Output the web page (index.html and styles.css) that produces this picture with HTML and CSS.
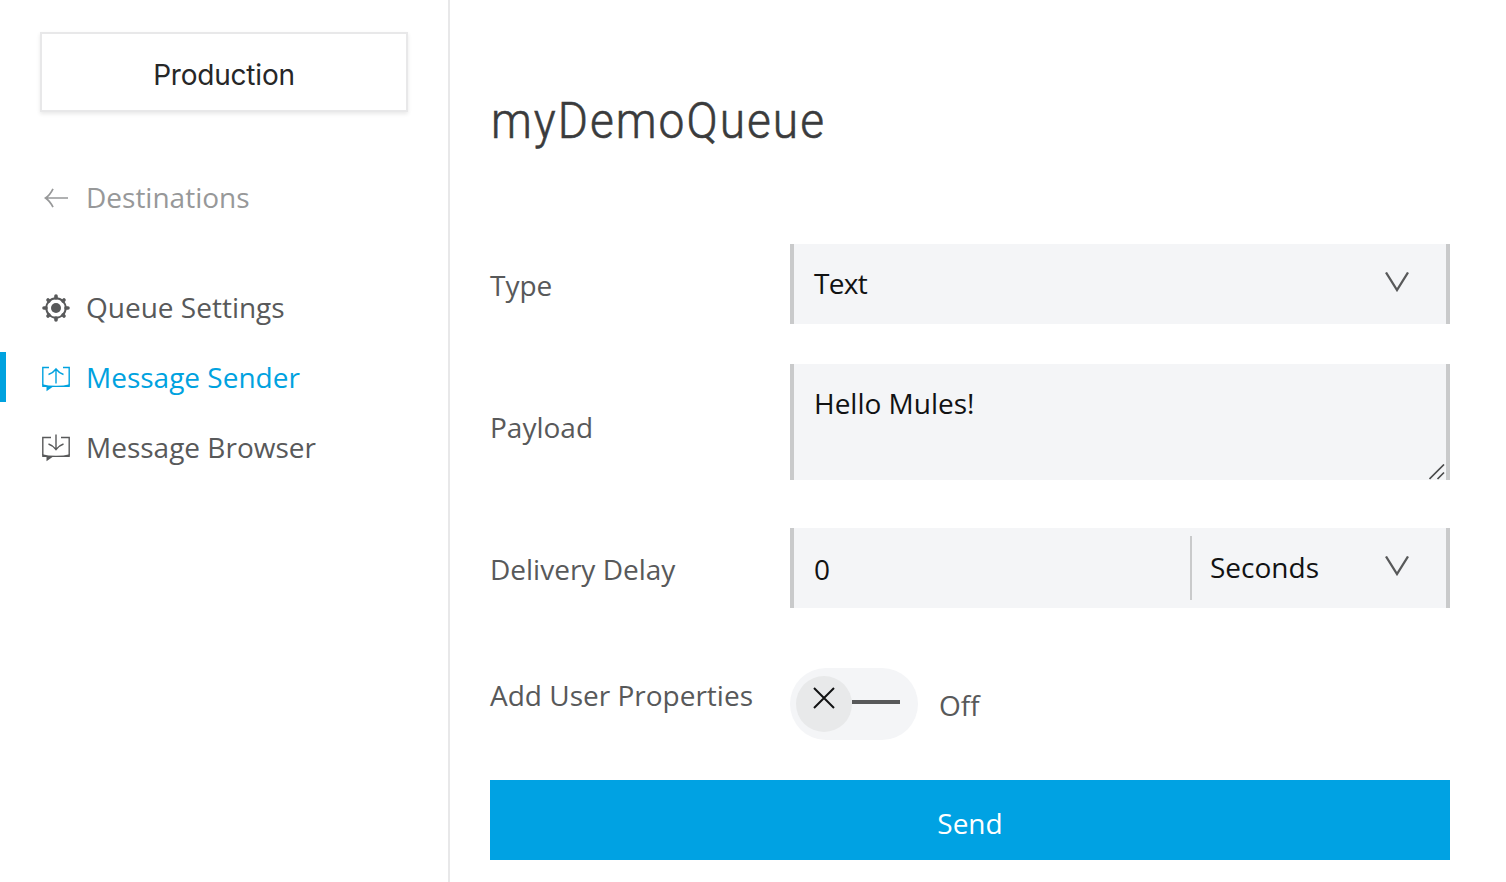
FILE: index.html
```html
<!DOCTYPE html>
<html lang="en">
<head>
<meta charset="utf-8">
<title>myDemoQueue</title>
<link rel="stylesheet" href="styles.css">
</head>
<body>
<div class="app">
  <aside class="sidebar">
    <button class="environment">Production</button>
    <nav class="nav">
      <a class="nav-item back">
        <svg class="icon" viewBox="0 0 28 28"><path d="M26 14H3.500M11 4.800Q8 11 3.500 14Q8 17 11 23.200" fill="none" stroke="currentColor" stroke-width="1.700"/></svg>
        <span>Destinations</span>
      </a>
      <a class="nav-item">
        <svg class="icon" viewBox="0 0 28 28"><circle cx="14" cy="14" r="9.700" fill="none" stroke="currentColor" stroke-width="2"/><circle cx="14" cy="14" r="5" fill="currentColor"/><path d="M14 2V4M14 24v2M2 14H4M24 14h2M6 6l1 1M21 21l1 1M6 22l1-1M21 7l1-1" stroke="currentColor" stroke-width="3.600" stroke-linecap="round"/></svg>
        <span>Queue Settings</span>
      </a>
      <a class="nav-item active">
        <svg class="icon" viewBox="0 0 28 28"><path d="M7 3.500H.8V21.500M27.200 21.500V3.500H21M14 19.500V5M6.500 10.500Q11 9 14 5Q17 9 21.500 10.500" fill="none" stroke="currentColor" stroke-width="1.400"/><path d="M.2 20.200Q6 21.800 14 21.800T27.800 20.200V23H10.500L4.500 27.300V23H.2z" fill="currentColor"/></svg>
        <span>Message Sender</span>
      </a>
      <a class="nav-item">
        <svg class="icon" viewBox="0 0 28 28"><path d="M9 3.500H.8V21.500M27.200 21.500V3.500H19M14 .5V15.500M6.500 10Q11 11.500 14 15.500Q17 11.500 21.500 10" fill="none" stroke="currentColor" stroke-width="1.400"/><path d="M.2 20.200Q6 21.800 14 21.800T27.800 20.200V23H10.500L4.500 27.300V23H.2z" fill="currentColor"/></svg>
        <span>Message Browser</span>
      </a>
    </nav>
  </aside>
  <main class="content">
    <h1 class="title">myDemoQueue</h1>
    <div class="row type-row">
      <div class="label">Type</div>
      <div class="field">
        <span class="value tight">Text</span>
        <svg class="chevron" viewBox="0 0 24 20"><path d="M1 .5L12 18L23 .5" fill="none" stroke="currentColor" stroke-width="2.300"/></svg>
      </div>
    </div>
    <div class="row payload-row">
      <div class="label">Payload</div>
      <div class="field textarea">
        <span class="value">Hello Mules!</span>
        <svg class="grip" viewBox="0 0 16 16"><path d="M.5 15L15 .5M8.500 15L15 8.500" fill="none" stroke="currentColor" stroke-width="1.700"/></svg>
      </div>
    </div>
    <div class="row delay-row">
      <div class="label">Delivery Delay</div>
      <div class="field">
        <span class="amount">0</span>
        <div class="unit">
          <span class="value">Seconds</span>
          <svg class="chevron" viewBox="0 0 24 20"><path d="M1 .5L12 18L23 .5" fill="none" stroke="currentColor" stroke-width="2.300"/></svg>
        </div>
      </div>
    </div>
    <div class="row toggle-row">
      <div class="label">Add User Properties</div>
      <div class="toggle">
        <span class="knob"><svg class="cross" viewBox="0 0 22 22"><path d="M1 1L21 21M21 1L1 21" fill="none" stroke="currentColor" stroke-width="2"/></svg></span>
        <span class="dash"></span>
      </div>
      <span class="state">Off</span>
    </div>
    <button class="send">Send</button>
  </main>
</div>
</body>
</html>
```
FILE: styles.css
```css
* { box-sizing: border-box; }
body {
  margin: 0;
  background: #fff;
  color: #58595a;
  font: 28px/40px "Open Sans", "Noto Sans", sans-serif;
}
.app { display: flex; height: 882px; overflow: hidden; }
.sidebar {
  width: 450px;
  padding-top: 32px;
  border-right: 2px solid #e8e8e9;
}
.environment {
  display: block;
  width: 368px;
  height: 80px;
  margin: 0 0 0 40px;
  padding: 5px 0 0;
  border: 2px solid #e8e8e9;
  background: #fff;
  box-shadow: 0 2px 4px rgba(0, 0, 0, .09);
  color: #262728;
  font: 28px/40px Inter, sans-serif;
  letter-spacing: -.2px;
}
.nav { display: flex; flex-direction: column; gap: 20px; padding-top: 60px; }
.nav-item {
  display: flex;
  align-items: center;
  gap: 16px;
  height: 50px;
  padding-left: 36px;
  border-left: 6px solid transparent;
}
.back { margin-bottom: 40px; color: #979899; }
.active { border-left-color: #00a2df; color: #00a2df; }
.icon { width: 28px; height: 28px; margin-top: 2px; }
.content {
  display: flex;
  flex-direction: column;
  width: 1000px;
  padding: 91px 0 0 40px;
}
.title {
  height: 60px;
  margin: 0 0 93px;
  padding-left: 1px;
  color: #3a3b3c;
  font: 300 50px/60px Roboto, sans-serif;
  letter-spacing: 2.2px;
  transform: scaleX(.921);
  transform-origin: left;
  -webkit-text-stroke: .6px #3a3b3c;
}
.row { display: flex; align-items: center; }
.label { width: 300px; padding-top: 2px; white-space: nowrap; }
.field {
  display: flex;
  align-items: center;
  justify-content: space-between;
  width: 660px;
  height: 80px;
  padding: 0 37px 0 20px;
  border: solid #c9cacb;
  border-width: 0 4px;
  background: #f4f5f7;
  color: #111213;
}
.value { padding-bottom: 2px; }
.tight { letter-spacing: -.7px; }
.chevron { width: 24px; height: 20px; margin-bottom: 4px; color: #58595a; }
.payload-row { margin-top: 40px; }
.payload-row .label { padding-top: 10px; }
.textarea {
  align-items: flex-start;
  height: 116px;
  padding: 19px 1px 0 20px;
}
.grip { align-self: flex-end; width: 16px; height: 16px; color: #4a4b4c; }
.delay-row { margin-top: 48px; }
.amount { padding-top: 2px; }
.unit {
  display: flex;
  align-items: center;
  justify-content: space-between;
  width: 219px;
  height: 64px;
  padding-left: 18px;
  border-left: 2px solid #c9cacb;
}
.toggle-row { height: 72px; margin-top: 60px; }
.toggle-row .label { padding: 0 0 18px; }
.toggle {
  display: flex;
  align-items: center;
  width: 128px;
  height: 72px;
  padding-left: 6px;
  border-radius: 36px;
  background: #f4f5f7;
}
.knob {
  display: flex;
  align-items: center;
  justify-content: center;
  width: 56px;
  height: 56px;
  padding-bottom: 12px;
  border-radius: 50%;
  background: #e8e9ea;
  color: #111213;
}
.cross { width: 22px; height: 22px; }
.dash { width: 48px; height: 4px; margin-bottom: 4px; background: #58595a; }
.state { padding: 2px 0 0 21px; }
.send {
  width: 960px;
  height: 80px;
  margin-top: 40px;
  padding: 6px 0 0;
  border: 0;
  background: #00a2e3;
  color: #fff;
  font: inherit;
}
```
